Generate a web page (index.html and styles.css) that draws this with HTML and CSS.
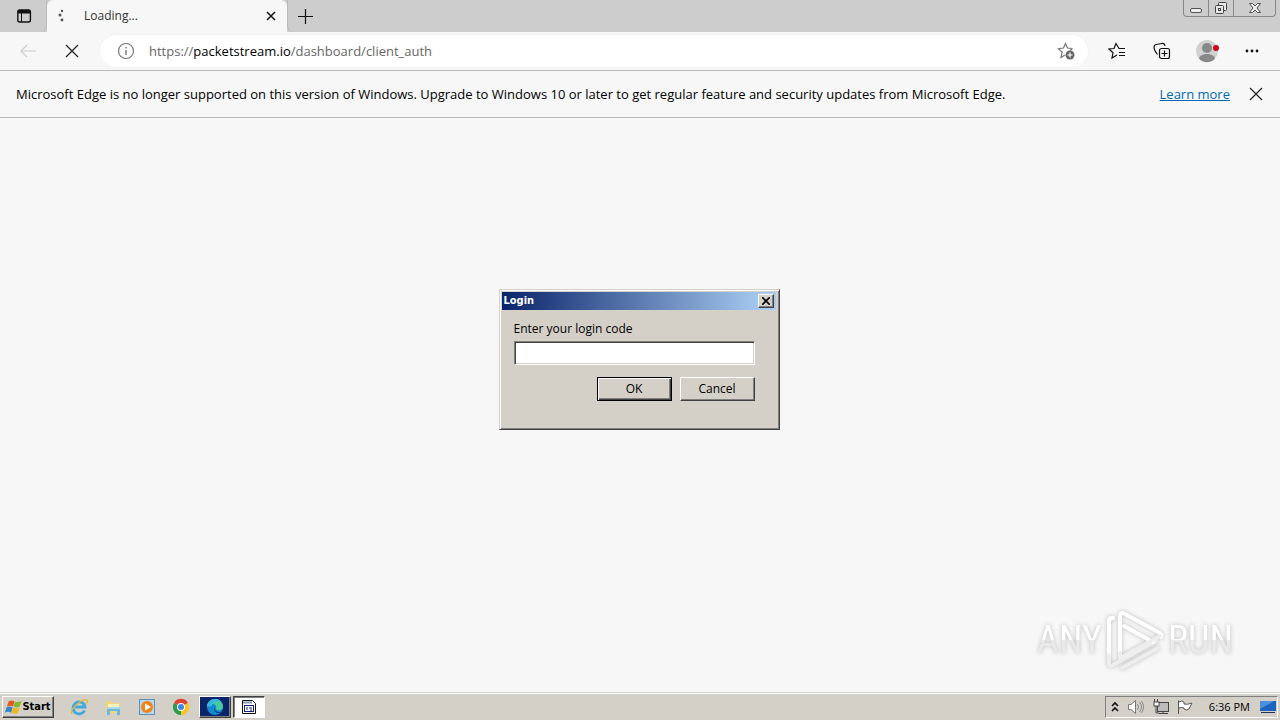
FILE: index.html
```html
<!DOCTYPE html>
<html lang="en">
<head>
<meta charset="utf-8">
<title>Loading...</title>
<link rel="stylesheet" href="styles.css">
</head>
<body>
<header class="tabstrip">
  <button class="tab-actions" aria-label="Tab actions">
    <svg width="16" height="16" viewBox="0 0 16 16"><rect x="1.8" y="2" width="12.6" height="12" rx="2" fill="none" stroke="#111" stroke-width="1.4"/><path d="M2 3.5Q2 2 4 2h8q2.400 0 2.400 2v1.500H2z" fill="#111"/><path d="M5.500 5v9" stroke="#111"/></svg>
  </button>
  <div class="tab">
    <svg class="spinner" width="16" height="16" viewBox="0 0 16 16" fill="#555"><circle cx="8" cy="3" r="1.200"/><circle cx="6" cy="7" r="1.500"/><circle cx="8" cy="12" r="1.400"/></svg>
    <span class="tab-title">Loading...</span>
    <button class="tab-close" aria-label="Close tab"><svg width="10" height="10" viewBox="0 0 10 10"><path d="M1 1l8 8M9 1l-8 8" stroke="#111" stroke-width="1.500"/></svg></button>
  </div>
  <button class="new-tab" aria-label="New tab"><svg width="15" height="15" viewBox="0 0 15 15"><path d="M7.500 0v15M0 7.500h15" stroke="#111" stroke-width="1.200"/></svg></button>
  <div class="window-controls">
    <button aria-label="Minimize"><svg width="14" height="14" viewBox="0 0 14 14"><rect x="1.500" y="7.500" width="11" height="4" rx="1.500" fill="#eee" stroke="#555"/></svg></button>
    <button aria-label="Restore"><svg width="14" height="14" viewBox="0 0 14 14" fill="#e6e6e6" stroke="#444"><rect x="4.500" y="1.500" width="8" height="8" rx="1"/><rect x="1.500" y="4.500" width="8" height="8" rx="1"/><rect x="4.500" y="7.500" width="2" height="2"/></svg></button>
    <button class="wide" aria-label="Close"><svg width="14" height="14" viewBox="0 0 14 14"><path d="M1.500 2.500h3L7 5l2.500-2.500h3L9 7l3.500 4.500h-3L7 9l-2.500 2.500h-3L5 7z" fill="#eee" stroke="#555"/></svg></button>
  </div>
</header>
<nav class="toolbar">
  <button class="tool" aria-label="Back"><svg width="18" height="16" viewBox="0 0 18 16"><path d="M17 8H2M8 2L2 8l6 6" fill="none" stroke="#ccc" stroke-width="1.200"/></svg></button>
  <button class="tool stop" aria-label="Stop"><svg width="14" height="14" viewBox="0 0 14 14"><path d="M1 1l12 12M13 1L1 13" stroke="#222" stroke-width="1.200"/></svg></button>
  <div class="address">
    <svg width="18" height="18" viewBox="0 0 18 18"><circle cx="9" cy="9" r="7.500" fill="none" stroke="#777" stroke-width="1.200"/><path d="M9 8v5M9 5v1.500" stroke="#777" stroke-width="1.400"/></svg>
    <span class="url">https://<b>packetstream.io</b>/dashboard/client_auth</span>
    <button class="add-favorite" aria-label="Add to favorites"><svg width="18" height="18" viewBox="0 0 18 18"><path d="M15.500 6.500L10.500 6 8.500 1.500 6.500 6l-5 .6 3.700 3.600L4 15.500l4-2.500M15.500 6.500L13 8.500" fill="none" stroke="#777" stroke-width="1.200"/><circle cx="13" cy="13" r="4.500" fill="#666"/><path d="M13 10.500v5M10.500 13h5" stroke="#fff" stroke-width="1.200"/></svg></button>
  </div>
  <div class="actions">
    <button class="tool" aria-label="Favorites"><svg width="18" height="18" viewBox="0 0 18 18"><path d="M17 6.500h-6L8 1.500 6 6.500l-5 .5 4 3.800-1 5.200 5-3M11 10.500h6M11 13.500h6" fill="none" stroke="#111" stroke-width="1.200"/></svg></button>
    <button class="tool" aria-label="Collections"><svg width="18" height="18" viewBox="0 0 18 18"><rect x="6.500" y="6.500" width="10" height="10" rx="2" fill="none" stroke="#111" stroke-width="1.200"/><path d="M11.500 8.500v6M8.500 11.500h6" stroke="#111" stroke-width="1.200"/><path d="M4.500 12.500C2.500 10 1 7 1 5q0-2 2-2.500l6-1q2.500-.3 3 2.500" fill="none" stroke="#111" stroke-width="1.200"/></svg></button>
    <button class="tool" aria-label="Profile"><svg width="24" height="24" viewBox="0 0 24 24"><circle cx="12" cy="12" r="11" fill="#d0d2d0"/><circle cx="12" cy="9" r="5" fill="#888"/><path d="M4 19.500c1-6 15-6 16 0-4 5-12 5-16 0z" fill="#888"/><circle cx="21" cy="9" r="3" fill="#d00014"/></svg></button>
    <button class="tool" aria-label="Settings and more"><svg width="16" height="6" viewBox="0 0 16 6" fill="#111"><circle cx="3" cy="3" r="1.400"/><circle cx="8" cy="3" r="1.400"/><circle cx="13" cy="3" r="1.400"/></svg></button>
  </div>
</nav>
<aside class="notice">
  <span>Microsoft Edge is no longer supported on this version of Windows. Upgrade to Windows 10 or later to get regular feature and security updates from Microsoft Edge.</span>
  <a href="#">Learn more</a>
  <button aria-label="Dismiss"><svg width="14" height="14" viewBox="0 0 14 14"><path d="M1 1l12 12M13 1L1 13" stroke="#222" stroke-width="1.200"/></svg></button>
</aside>
<main class="page">
  <div class="watermark">
    <span>ANY</span>
    <svg width="58" height="64" viewBox="0 0 58 64" fill="none" stroke="#fff" stroke-width="4" stroke-linejoin="round" stroke-linecap="round"><path d="M7 10q-4-1-4 3v42q0 4 4 2l43-24" stroke="#eee"/><path d="M3 44V13q0-3 4-3"/><path d="M14 46V8q0-5 5-2l35 19q2 1 1 4M18 18l29 16" /><path d="M14 45v5l40-22M16 60l36-20" stroke="#eee"/></svg>
    <span>RUN</span>
  </div>
</main>
<footer class="taskbar">
  <button class="start"><svg width="17" height="18" viewBox="0 0 18 18"><path d="M4 3q3-2 6 0L8.500 8.500Q5 7 2 8.500z" fill="#e45722"/><path d="M10.500 3.500q3 1 7-1l-2 6q-3 2-6.500 0z" fill="#82b92d"/><path d="M1.500 9.500q3-2 6.500 0l-1.500 5.500q-3-2-6.500 0z" fill="#3b83cf"/><path d="M8.500 9.500q3 2 7 0l-2 6q-3 1-6.500-.5z" fill="#efb719"/></svg>Start</button>
  <div class="launchers">
    <button aria-label="Internet Explorer"><svg width="18" height="18" viewBox="0 0 18 18"><path d="M14.500 12.500A6 6 0 1 1 15 9H5" fill="none" stroke="#3fa9df" stroke-width="2.800"/><path d="M2 16C-1 12 12 0 17 2c1 1 0 3-1 4" fill="none" stroke="#e5b935" stroke-width="1.200"/></svg></button>
    <button aria-label="Explorer"><svg width="18" height="18" viewBox="0 0 18 18"><path d="M2 3h5l1 2h8v10H2z" fill="#efd67c"/><path d="M4 6h11v5H4z" fill="#fff3bd"/><path d="M3 9h13v8h-3v-4H6v4H3z" fill="#6db9dc"/><path d="M3 9h13v2H3z" fill="#a9d9e9"/></svg></button>
    <button aria-label="Media Player"><svg width="18" height="18" viewBox="0 0 18 18"><rect x="1.500" y="1.500" width="15" height="15" fill="#b9d7ed" stroke="#5b91bd"/><circle cx="9" cy="9" r="6" fill="#f18417"/><path d="M7 5.500v7l6-3.500z" fill="#fff"/></svg></button>
    <button aria-label="Chrome"><svg width="18" height="18" viewBox="0 0 18 18"><path d="M9 9L2 5a8 8 0 0 1 14 0z" fill="#df4334"/><path d="M9 9l7-4a8 8 0 0 1-7 12z" fill="#f9c324"/><path d="M9 9v8A8 8 0 0 1 2 5z" fill="#2b9b4c"/><circle cx="9" cy="9" r="4" fill="#fff"/><circle cx="9" cy="9" r="3" fill="#4285e4"/></svg></button>
  </div>
  <button class="task edge" aria-label="Microsoft Edge"><svg width="18" height="18" viewBox="0 0 18 18"><circle cx="9" cy="9" r="8" fill="#1688ce"/><path d="M1 9a8 8 0 0 1 16 0c0 4-6 4-7 2 2-4-4-8-9-2z" fill="#46cba1"/><path d="M1 9c0-5 4-8 9-8 2 0 4 1 5 3-5-2-9 0-9 4z" fill="#35b5e5"/><path d="M9 8c-2 3 1 7 6 6-4 3-9-2-6-6z" fill="#07246b"/></svg></button>
  <button class="task active" aria-label="Login"><svg width="16" height="16" viewBox="0 0 16 16"><path d="M1.500 1.500h10l3 3v10h-13z" fill="#fff" stroke="#111"/><path d="M2 3.500h9" stroke="#8794b5" stroke-width="2"/><rect x="3.500" y="6.500" width="9" height="6" fill="#fff" stroke="#14217c"/><path d="M6 8v3M8 9h3M9 11h2" stroke="#14217c"/></svg></button>
  <div class="tray">
    <svg width="8" height="12" viewBox="0 0 8 12"><path d="M1 5l3-3 3 3M1 10l3-3 3 3" fill="none" stroke="#111" stroke-width="1.600"/></svg>
    <svg width="18" height="16" viewBox="0 0 18 16"><path d="M1.500 5.500H4L8.500 1.500v13L4 10.500H1.500z" fill="#fff" stroke="#777"/><path d="M10.500 5q2 3 0 6M12.500 3q4 5 0 10M14.500 2q4 6 0 12" fill="none" stroke="#888"/></svg>
    <svg width="16" height="16" viewBox="0 0 16 16"><rect x="4.500" y="3.500" width="11" height="9" fill="#bbb" stroke="#444"/><path d="M6 14.500h9M10 12v2M3 7v7h3M1.500 0v3M4.500 0v3" stroke="#444" fill="none"/><rect x="1" y="3" width="5" height="4" fill="#fff" stroke="#444"/></svg>
    <svg width="16" height="16" viewBox="0 0 16 16"><path d="M1.500 15V1.500M2 3q3-2 5 0v2q3 1 8-1l-3 6q-3 2-5 0V9q-2-1-5 0" fill="#fff" stroke="#555"/></svg>
    <time>6:36 PM</time>
    <svg width="16" height="14" viewBox="0 0 16 14"><rect x="0" y="1" width="16" height="10" fill="#1d63bd"/><path d="M0 1h14L0 9z" fill="#4a91dd"/><path d="M1 12.500h14" stroke="#235" /></svg>
  </div>
</footer>
<div class="overlay">
  <form class="dialog" role="dialog" aria-labelledby="dialog-title">
    <div class="titlebar"><span id="dialog-title">Login</span><button type="button" aria-label="Close dialog"><svg width="8" height="8" viewBox="0 0 8 8"><path d="M0 0l8 8M8 0L0 8" stroke="#000" stroke-width="1.600"/></svg></button></div>
    <div class="dialog-body">
      <label for="code">Enter your login code</label>
      <input id="code" type="text">
      <div class="buttons"><button class="default" type="button">OK</button><button type="button">Cancel</button></div>
    </div>
  </form>
</div>
</body>
</html>
```
FILE: styles.css
```css
* { box-sizing: border-box; }
body {
  margin: 0;
  min-height: 100vh;
  display: flex;
  flex-direction: column;
  background: #f7f7f7;
  color: #000;
  font: 13px/18px "Open Sans", "Noto Sans", sans-serif;
}
button {
  display: flex;
  align-items: center;
  justify-content: center;
  padding: 0;
  border: 0;
  background: none;
  color: inherit;
  font: inherit;
}
svg { flex: none; display: block; }

.tabstrip { display: flex; height: 32px; background: #cdcdcd; }
.tab-actions { width: 47px; padding-left: 2px; border-right: 1px solid #bbb; border-radius: 0 0 6px 0; }
.tab {
  display: flex;
  align-items: center;
  width: 240px;
  padding: 0 10px 0 7px;
  background: #f7f7f7;
  border-radius: 6px 6px 0 0;
}
.tab-title { flex: 1; padding-left: 14px; font-size: 12px; color: #333; }
.tab-close { width: 12px; height: 20px; }
.new-tab { width: 35px; border-left: 1px solid #bbb; border-radius: 0 0 0 6px; }
.window-controls {
  display: flex;
  height: 17px;
  margin: 0 4px 0 auto;
  border: 1px solid #888;
  border-top: 0;
  border-radius: 0 0 4px 4px;
}
.window-controls button { width: 25px; border-right: 1px solid #888; }
.window-controls .wide { width: 41px; border: 0; }

.toolbar {
  display: flex;
  align-items: center;
  height: 39px;
  padding: 0 13px;
  border-bottom: 1px solid #bbb;
}
.tool { width: 30px; height: 30px; }
.stop { margin: 0 13px 0 14px; }
.address {
  flex: 1;
  display: flex;
  align-items: center;
  height: 32px;
  padding: 0 13px 0 17px;
  background: #fff;
  border-radius: 16px;
  box-shadow: 0 0 0 1px #f2f2f2;
}
.url { flex: 1; padding-left: 14px; color: #666; }
.url b { font-weight: 400; color: #000; }
.actions { display: flex; gap: 15px; padding-left: 14px; }

.notice {
  display: flex;
  align-items: center;
  height: 47px;
  padding: 0 17px 0 16px;
  border-bottom: 1px solid #bbb;
}
.notice a { margin: 0 19px 0 auto; color: #0067b0; }

.page { flex: 1; display: flex; align-items: flex-end; justify-content: flex-end; }
.watermark {
  display: flex;
  align-items: center;
  gap: 4px;
  padding: 0 47px 20px 0;
  font: 38px/42px "Liberation Sans Narrow", "Roboto Condensed", "Open Sans Condensed", sans-serif;
  filter: drop-shadow(0 0 2px #bbb);
}
.watermark span {
  background: linear-gradient(#fff 50%, #eaeaea 50%);
  background-clip: text;
  color: transparent;
}

.taskbar {
  display: flex;
  align-items: center;
  height: 28px;
  padding: 1px 2px 0;
  background: #d4d0c8;
  border-top: 1px solid #d4d0c8;
  box-shadow: inset 0 1px #fff;
}
.start, .task, .buttons button, .titlebar button {
  background: #d4d0c8;
  border: 1px solid;
  border-color: #fff #404040 #404040 #fff;
  box-shadow: inset -1px -1px #808080;
}
.start { width: 52px; height: 22px; font: bold 11px/16px "DejaVu Sans Condensed", "DejaVu Sans", sans-serif; }
.launchers { display: flex; gap: 16px; padding: 0 9px 0 16px; }
.task { width: 32px; height: 22px; }
.task.edge { background: #0a246a; margin-right: 2px; }
.task.active { background: #fff; border-color: #404040 #fff #fff #404040; box-shadow: inset 1px 1px #808080; }
.tray {
  display: flex;
  align-items: center;
  gap: 8px;
  height: 22px;
  margin-left: auto;
  padding: 0 1px 0 5px;
  border: 1px solid;
  border-color: #808080 #fff #fff #808080;
  font-size: 11px;
}
.tray time { padding: 0 2px 0 8px; }

.overlay { position: fixed; inset: 0; display: grid; place-items: center; padding: 0 2px 2px 0; }
.dialog {
  width: 281px;
  padding: 2px 3px 28px 2px;
  background: #d4d0c8;
  border: 1px solid;
  border-color: #d4d0c8 #404040 #404040 #d4d0c8;
  box-shadow: inset 1px 1px #fff, inset -1px -1px #808080;
}
.titlebar {
  display: flex;
  align-items: center;
  justify-content: space-between;
  height: 18px;
  padding: 0 2px;
  background: linear-gradient(90deg, #0a246a, #a6caf0 95%);
  color: #fff;
  font: bold 11px/18px "DejaVu Sans Condensed", "DejaVu Sans", sans-serif;
}
.titlebar button { width: 16px; height: 14px; }
.dialog-body { padding: 10px 21px 0 12px; font-size: 12px; }
.dialog label { display: block; }
.dialog input {
  display: block;
  width: 100%;
  height: 24px;
  margin: 3px 0 12px;
  border: 1px solid;
  border-color: #808080 #fff #fff #808080;
  box-shadow: inset 1px 1px #404040, inset -1px -1px #d4d0c8;
  background: #fff;
  font: inherit;
}
.buttons { display: flex; justify-content: flex-end; gap: 8px; }
.buttons button { width: 75px; height: 24px; }
.buttons .default { border-color: #000; box-shadow: inset 1px 1px #fff, inset -1px -1px #404040, inset -2px -2px #808080; }
```
